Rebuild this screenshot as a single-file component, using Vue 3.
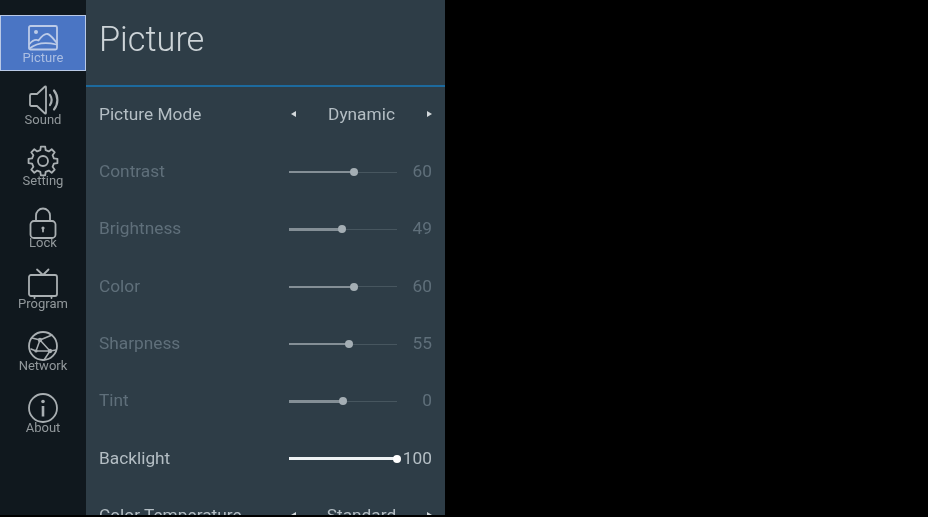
<script setup>
const navItems = [
  { name: 'Picture', active: true },
  { name: 'Sound' },
  { name: 'Setting' },
  { name: 'Lock' },
  { name: 'Program' },
  { name: 'Network' },
  { name: 'About' },
]
const rows = [
  { label: 'Picture Mode', type: 'select', value: 'Dynamic', on: true },
  { label: 'Contrast', type: 'slider', value: 60, pct: 60 },
  { label: 'Brightness', type: 'slider', value: 49, pct: 49 },
  { label: 'Color', type: 'slider', value: 60, pct: 60 },
  { label: 'Sharpness', type: 'slider', value: 55, pct: 55.500 },
  { label: 'Tint', type: 'slider', value: 0, pct: 50 },
  { label: 'Backlight', type: 'slider', value: 100, pct: 100, on: true },
  { label: 'Color Temperature', type: 'select', value: 'Standard', on: true },
]
// eight-toothed gear outline for the Setting icon
const gearPath = (() => {
  const pts = []
  for (let i = 0; i < 8; i++) {
    const a = (i * Math.PI) / 4 - Math.PI / 2
    const step = [[-0.24, 11.2], [-0.15, 14.6], [0.15, 14.6], [0.24, 11.2]]
    for (const [d, r] of step) {
      pts.push(`${(16 + r * Math.cos(a + d)).toFixed(2)} ${(16 + r * Math.sin(a + d)).toFixed(2)}`)
    }
  }
  return 'M' + pts.join('L') + 'Z'
})()
</script>

<template>
  <div class="screen">
    <div class="tv">
      <aside class="rail">
        <div v-for="item in navItems" :key="item.name" class="nav-item" :class="{ active: item.active }">
          <svg class="icon" viewBox="0 0 32 32" fill="none" stroke="currentColor" stroke-width="1.8" stroke-linecap="round" stroke-linejoin="round">
            <template v-if="item.name === 'Picture'">
              <rect x="2" y="4" width="28" height="23.500" rx="1.500" />
              <circle cx="9" cy="10" r="2" fill="currentColor" stroke="none" />
              <path d="M2.500 22c3-3.500 6-5 9-3.500 3-4 6-7 9-6.500 3 .5 6 5 9 8.500" />
              <path d="M2.500 26.500c6-5 15-7 27-4" />
            </template>
            <template v-else-if="item.name === 'Sound'">
              <path d="M3 11.500Q3 10 4.500 10H10l8-7.500q1-.5 1 1v25q0 1.500-1 1L10 22H4.500Q3 22 3 20.500z" />
              <path d="M23 11c2 3 2 7 0 10" stroke-width="2.200" />
              <path d="M27 6.500c4.500 5.500 4.500 13.500 0 19" stroke-width="2.200" />
            </template>
            <template v-else-if="item.name === 'Setting'">
              <path :d="gearPath" />
              <circle cx="16" cy="16" r="5" />
            </template>
            <template v-else-if="item.name === 'Lock'">
              <rect x="3.500" y="14" width="25" height="17" rx="3.500" />
              <path d="M9 14V8.500a7 7 0 0 1 14 0V14" />
              <circle cx="16" cy="21" r="1.600" fill="currentColor" stroke="none" />
              <path d="M16 21v3.500" />
            </template>
            <template v-else-if="item.name === 'Program'">
              <rect x="2" y="7" width="28" height="21" rx="2" />
              <path d="M10 1.500L16 7l5.500-5.500" />
              <path d="M7.500 28v2M24.500 28v2" />
            </template>
            <template v-else-if="item.name === 'Network'">
              <circle cx="16" cy="16" r="14" />
              <path d="M5 8l8 2 12-5M13 10l10 11 6-1M13 10L9 21l14 0M23 21l-6 9M9 21l-5-2" stroke-width="1.500" />
              <circle cx="13" cy="10" r="2.200" fill="currentColor" stroke="none" />
              <circle cx="23" cy="21" r="2.200" fill="currentColor" stroke="none" />
              <circle cx="9" cy="21" r="1.600" fill="currentColor" stroke="none" />
            </template>
            <template v-else>
              <circle cx="16" cy="16" r="14" />
              <circle cx="16" cy="9.500" r="1.800" fill="currentColor" stroke="none" />
              <path d="M16 14v10.500" stroke-width="2.600" stroke-linecap="butt" />
            </template>
          </svg>
          <span class="nav-label">{{ item.name }}</span>
        </div>
      </aside>

      <main class="panel">
        <header class="head">
          <h1 class="title">Picture</h1>
        </header>
        <div class="list">
          <div v-for="row in rows" :key="row.label" class="row" :class="{ on: row.on }">
            <span class="label">{{ row.label }}</span>
            <div v-if="row.type === 'select'" class="select">
              <span class="tri left"></span>
              <span class="sel-value">{{ row.value }}</span>
              <span class="tri right"></span>
            </div>
            <div v-else class="slider">
              <div class="track">
                <div class="fill" :style="{ width: row.pct + '%' }"></div>
                <span class="thumb" :style="{ left: row.pct + '%' }"></span>
              </div>
              <span class="num">{{ row.value }}</span>
            </div>
          </div>
        </div>
      </main>
    </div>
  </div>
</template>

<style>
html, body { margin: 0; background: #000; }
</style>

<style scoped>
.screen {
  width: 928px;
  height: 517px;
  overflow: hidden;
  background: #000;
  font-family: Roboto, "Liberation Sans", sans-serif;
}
.tv {
  display: flex;
  width: 445px;
  height: 515px;
  overflow: hidden;
}
.rail {
  width: 86px;
  flex: none;
  background: #10181e;
  display: flex;
  flex-direction: column;
  gap: 5.600px;
  padding-top: 15px;
  box-sizing: border-box;
}
.nav-item {
  height: 56px;
  box-sizing: border-box;
  display: flex;
  flex-direction: column;
  align-items: center;
  justify-content: center;
  color: #a9afb2;
  filter: blur(0.6px);
}
.nav-item.active {
  background: #4a75c4;
  border: 1px solid #b9c9e6;
  color: #bccbe8;
  filter: blur(0.4px);
}
.icon {
  width: 32px;
  height: 32px;
  flex: none;
}
.nav-label {
  font-size: 13px;
  line-height: 13px;
  margin-top: -3px;
  opacity: 0.85;
}
.panel {
  flex: 1;
  background: #2e3d47;
}
.head {
  height: 87px;
  box-sizing: border-box;
  border-bottom: 2px solid #1c6a9e;
  padding-left: 13px;
  padding-top: 19px;
}
.title {
  margin: 0;
  font-size: 34.300px;
  line-height: 40px;
  font-weight: 300;
  color: #cdd4d8;
  filter: blur(0.5px);
}
.list {
  filter: blur(0.6px);
}
.row {
  height: 57.300px;
  box-sizing: border-box;
  padding: 0 13px 3.500px 13px;
  display: flex;
  align-items: center;
  justify-content: space-between;
  color: #5f6f7a;
  font-size: 17.300px;
}
.row.on {
  color: #b4bec4;
}
.select {
  width: 143px;
  display: flex;
  align-items: center;
  justify-content: space-between;
  padding: 0 0 0 1px;
  box-sizing: border-box;
}
.sel-value {
  color: #b4bec4;
}
.tri {
  width: 0;
  height: 0;
  border-top: 3.500px solid transparent;
  border-bottom: 3.500px solid transparent;
}
.tri.left { border-right: 5px solid #d3d9dc; margin-left: 1px; }
.tri.right { border-left: 5px solid #d3d9dc; }
.slider {
  width: 143px;
  display: flex;
  align-items: center;
  justify-content: space-between;
}
.track {
  position: relative;
  width: 108px;
  height: 1px;
  margin-top: 2px;
  background: #47565f;
}
.fill {
  height: 2.500px;
  margin-top: -0.750px;
  background: #848f96;
}
.thumb {
  position: absolute;
  top: 50%;
  width: 8px;
  height: 8px;
  border-radius: 50%;
  background: #a4aeb4;
  transform: translate(-50%, -50%);
}
.on .fill { background: #eef2f4; }
.on .thumb { background: #fff; }
.num {
  color: #5f6f7a;
}
.on .num { color: #b4bec4; }
</style>
